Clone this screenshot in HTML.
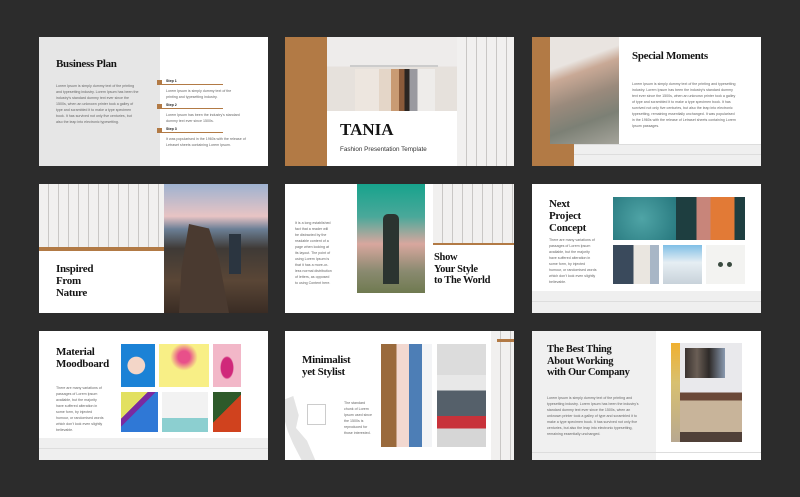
<!DOCTYPE html>
<html><head><meta charset="utf-8"><style>
*{margin:0;padding:0;box-sizing:border-box}
body{width:800px;height:497px;background:#2c2c2c;position:relative;overflow:hidden;font-family:"Liberation Sans",sans-serif}
.s{position:absolute;width:229px;height:129px;background:#fff;overflow:hidden}
.a{position:absolute}
.t{position:absolute;font-family:"Liberation Serif",serif;font-weight:bold;color:#151515;letter-spacing:-0.3px;line-height:1.1}
.p{position:absolute;font-size:3.6px;line-height:6px;color:#666}
.br{background:#b27a45}
.str{background:repeating-linear-gradient(90deg,#f1f0ef 0 9px,#c9c7c5 9px 10px)}
.band{background:#efefef}
</style></head><body>

<div class="s" style="left:39px;top:37px">
 <div class="a" style="left:0;top:0;width:121px;height:129px;background:#e6e6e6"></div>
 <div class="t" style="left:17px;top:21px;font-size:11px">Business Plan</div>
 <div class="p" style="left:17px;top:46px;width:83px">Lorem Ipsum is simply dummy text of the printing and typesetting industry. Lorem Ipsum has been the industry's standard dummy text ever since the 1500s, when an unknown printer took a galley of type and scrambled it to make a type specimen book. It has survived not only five centuries, but also the leap into electronic typesetting.</div>
 <div class="a br" style="left:118px;top:43px;width:5px;height:5px"></div><div class="a br" style="left:118px;top:47px;width:66px;height:1px"></div>
 <div class="p" style="left:127px;top:41px;font-weight:bold;color:#222">Step 1</div>
 <div class="p" style="left:127px;top:51px;width:76px">Lorem Ipsum is simply dummy text of the printing and typesetting industry.</div>
 <div class="a br" style="left:118px;top:67px;width:5px;height:5px"></div><div class="a br" style="left:118px;top:71px;width:66px;height:1px"></div>
 <div class="p" style="left:127px;top:65px;font-weight:bold;color:#222">Step 2</div>
 <div class="p" style="left:127px;top:75px;width:76px">Lorem Ipsum has been the industry's standard dummy text ever since 1500s.</div>
 <div class="a br" style="left:118px;top:91px;width:5px;height:5px"></div><div class="a br" style="left:118px;top:95px;width:66px;height:1px"></div>
 <div class="p" style="left:127px;top:89px;font-weight:bold;color:#222">Step 3</div>
 <div class="p" style="left:127px;top:99px;width:80px">It was popularised in the 1960s with the release of Letraset sheets containing Lorem Ipsum.</div>
</div>

<div class="s" style="left:285px;top:37px">
 <div class="a br" style="left:0;top:0;width:42px;height:129px"></div>
 <div class="a" style="left:42px;top:0;width:130px;height:74px;background:linear-gradient(180deg,#eeeceb 0 40%,#e6e1dc 40%)"></div>
 <div class="a" style="left:65px;top:28px;width:88px;height:2px;background:#ccc"></div>
 <div class="a" style="left:70px;top:32px;width:80px;height:42px;background:linear-gradient(90deg,#ede6df 0 30%,#e4d6c8 30% 45%,#c99b73 45% 55%,#8a5a3a 55% 62%,#2a2522 62% 68%,#9a9aa0 68% 78%,#eeecea 78%)"></div>
 <div class="a str" style="left:172px;top:0;width:57px;height:129px"></div>
 <div class="t" style="left:55px;top:84px;font-size:17px;letter-spacing:0">TANIA</div>
 <div class="a" style="left:55px;top:109px;font-size:6.3px;color:#333">Fashion Presentation Template</div>
</div>

<div class="s" style="left:532px;top:37px">
 <div class="a br" style="left:0;top:0;width:42px;height:129px"></div>
 <div class="a" style="left:18px;top:0;width:69px;height:107px;background:linear-gradient(160deg,#e9e4e0 0 25%,#c9a996 35%,#9a8a7c 55%,#7c8075 75%,#a5a49b)"></div>
 <div class="t" style="left:100px;top:13px;font-size:11px">Special Moments</div>
 <div class="p" style="left:100px;top:44px;width:106px">Lorem Ipsum is simply dummy text of the printing and typesetting industry. Lorem Ipsum has been the industry's standard dummy text ever since the 1500s, when an unknown printer took a galley of type and scrambled it to make a type specimen book. It has survived not only five centuries, but also the leap into electronic typesetting, remaining essentially unchanged. It was popularised in the 1960s with the release of Letraset sheets containing Lorem Ipsum passages.</div>
 <div class="a band" style="left:42px;top:107px;width:187px;height:22px;border-top:1px solid #ddd"></div>
 <div class="a" style="left:42px;top:117px;width:187px;height:1px;background:#ddd"></div>
</div>

<div class="s" style="left:39px;top:184px">
 <div class="a str" style="left:0;top:0;width:125px;height:63px"></div>
 <div class="a br" style="left:0;top:63px;width:125px;height:4px"></div>
 <div class="a" style="left:125px;top:0;width:104px;height:129px;background:linear-gradient(180deg,#9eb2d0 0,#e8c4c4 25%,#6b7f96 35%,#3f3a36 50%,#5a4636 75%,#3a2c24)"></div>
 <div class="a" style="left:140px;top:40px;width:50px;height:89px;background:#4a3a30;clip-path:polygon(20% 0,60% 5%,80% 40%,100% 100%,0 100%,5% 50%)"></div>
 <div class="a" style="left:190px;top:50px;width:12px;height:40px;background:#2b3540"></div>
 <div class="t" style="left:17px;top:79px;font-size:11px">Inspired<br>From<br>Nature</div>
</div>

<div class="s" style="left:285px;top:184px">
 <div class="p" style="left:10px;top:36px;width:38px">It is a long established fact that a reader will be distracted by the readable content of a page when looking at its layout. The point of using Lorem Ipsum is that it has a more-or-less normal distribution of letters, as opposed to using Content here.</div>
 <div class="a" style="left:72px;top:0;width:68px;height:109px;background:linear-gradient(180deg,#17a38c 0,#4aa89a 30%,#d8a79e 55%,#8a8a70 80%,#6f7a50)"></div>
 <div class="a" style="left:98px;top:30px;width:16px;height:70px;background:#2b3430;border-radius:5px 5px 0 0"></div>
 <div class="a str" style="left:148px;top:0;width:81px;height:59px"></div>
 <div class="a br" style="left:148px;top:59px;width:81px;height:2px"></div>
 <div class="t" style="left:149px;top:68px;font-size:10.5px">Show<br>Your Style<br>to The World</div>
</div>

<div class="s" style="left:532px;top:184px">
 <div class="t" style="left:17px;top:14px;font-size:11px">Next<br>Project<br>Concept</div>
 <div class="p" style="left:17px;top:53px;width:48px">There are many variations of passages of Lorem Ipsum available, but the majority have suffered alteration in some form, by injected humour, or randomised words which don't look even slightly believable.</div>
 <div class="a" style="left:81px;top:13px;width:72px;height:43px;background:radial-gradient(circle at 40% 50%,#4fa4a6,#1f6f76)"></div>
 <div class="a" style="left:144px;top:13px;width:69px;height:43px;background:linear-gradient(90deg,#1e3e40 0 30%,#c8857a 30% 50%,#e27a36 50% 85%,#1e3e40 85%)"></div>
 <div class="a" style="left:81px;top:61px;width:46px;height:39px;background:linear-gradient(90deg,#3a4a5c 0 45%,#eae6e0 45% 80%,#a8b6c6 80%)"></div>
 <div class="a" style="left:131px;top:61px;width:39px;height:39px;background:linear-gradient(180deg,#7fbfe6,#e6eef3 45%,#c8d2da)"></div>
 <div class="a" style="left:174px;top:61px;width:39px;height:39px;background:#f3f3f1"></div>
 <div class="a" style="left:186px;top:78px;width:5px;height:5px;border-radius:50%;background:#3a4a40"></div><div class="a" style="left:195px;top:78px;width:5px;height:5px;border-radius:50%;background:#3a4a40"></div>
 <div class="a band" style="left:0;top:107px;width:229px;height:22px"></div>
 <div class="a" style="left:0;top:117px;width:229px;height:1px;background:#ddd"></div>
</div>

<div class="s" style="left:39px;top:331px">
 <div class="t" style="left:17px;top:15px;font-size:11px">Material<br>Moodboard</div>
 <div class="p" style="left:17px;top:54px;width:48px">There are many variations of passages of Lorem Ipsum available, but the majority have suffered alteration in some form, by injected humour, or randomised words which don't look even slightly believable.</div>
 <div class="a" style="left:82px;top:13px;width:34px;height:43px;background:radial-gradient(circle at 45% 50%,#f3d6c8 0 30%,#1b82d6 32%)"></div>
 <div class="a" style="left:120px;top:13px;width:50px;height:43px;background:radial-gradient(circle at 50% 30%,#e8508a 0 15%,#f8ef86 35%)"></div>
 <div class="a" style="left:174px;top:13px;width:28px;height:43px;background:radial-gradient(ellipse at 50% 55%,#d0287a 0 30%,#f2b7c8 35%)"></div>
 <div class="a" style="left:82px;top:61px;width:37px;height:40px;background:linear-gradient(135deg,#e2e060 0 35%,#7a2aa0 35% 45%,#2f78d6 45%)"></div>
 <div class="a" style="left:123px;top:61px;width:46px;height:40px;background:linear-gradient(180deg,#f2f2f2 0 65%,#8ccfd0 65%)"></div>
 <div class="a" style="left:174px;top:61px;width:28px;height:40px;background:linear-gradient(135deg,#2e5a2a 0 45%,#d0421e 45%)"></div>
 <div class="a band" style="left:0;top:107px;width:229px;height:22px"></div>
 <div class="a" style="left:0;top:117px;width:229px;height:1px;background:#ddd"></div>
</div>

<div class="s" style="left:285px;top:331px">
 <div class="a" style="left:0;top:65px;width:55px;height:64px;background:#e4e4e4;clip-path:polygon(0 5%,15% 0,25% 30%,20% 50%,40% 70%,55% 100%,30% 100%,15% 75%,5% 55%,0 40%)"></div>
 <div class="a" style="left:22px;top:73px;width:19px;height:21px;border:1px solid #ccc"></div>
 <div class="t" style="left:17px;top:23px;font-size:11px">Minimalist<br>yet Stylist</div>
 <div class="p" style="left:59px;top:69px;width:30px">The standard chunk of Lorem Ipsum used since the 1500s is reproduced for those interested.</div>
 <div class="a" style="left:96px;top:13px;width:51px;height:103px;background:linear-gradient(90deg,#9a6a3c 0 30%,#f2d8d0 30% 55%,#4d7eb6 55% 80%,#f3f4f6 80%)"></div>
 <div class="a" style="left:152px;top:13px;width:49px;height:103px;background:linear-gradient(180deg,#dcdcdc 0 30%,#e8e8e8 30% 45%,#55606a 45% 70%,#c8323a 70% 82%,#d6d6d6 82%)"></div>
 <div class="a str" style="left:206px;top:0;width:23px;height:129px"></div>
 <div class="a br" style="left:212px;top:8px;width:17px;height:3px"></div>
</div>

<div class="s" style="left:532px;top:331px">
 <div class="a" style="left:0;top:0;width:124px;height:129px;background:#f0f0f0"></div>
 <div class="t" style="left:15px;top:13px;font-size:10.5px">The Best Thing<br>About Working<br>with Our Company</div>
 <div class="p" style="left:15px;top:64px;width:95px">Lorem Ipsum is simply dummy text of the printing and typesetting industry. Lorem Ipsum has been the industry's standard dummy text ever since the 1500s, when an unknown printer took a galley of type and scrambled it to make a type specimen book. It has survived not only five centuries, but also the leap into electronic typesetting, remaining essentially unchanged.</div>
 <div class="a" style="left:139px;top:12px;width:71px;height:99px;background:linear-gradient(180deg,#e9e9ec 0 50%,#6a4838 50% 58%,#c8b49a 58% 90%,#504038 90%)"></div>
 <div class="a" style="left:139px;top:12px;width:9px;height:99px;background:linear-gradient(180deg,#f0b030,#d8c070 40%,#b8a890)"></div>
 <div class="a" style="left:153px;top:17px;width:40px;height:30px;background:linear-gradient(90deg,#3a3330,#6a5e55 30%,#2e2a28 60%,#8a9ab0)"></div>
 <div class="a" style="left:0;top:121px;width:229px;height:1px;background:#ddd"></div>
</div>

</body></html>
